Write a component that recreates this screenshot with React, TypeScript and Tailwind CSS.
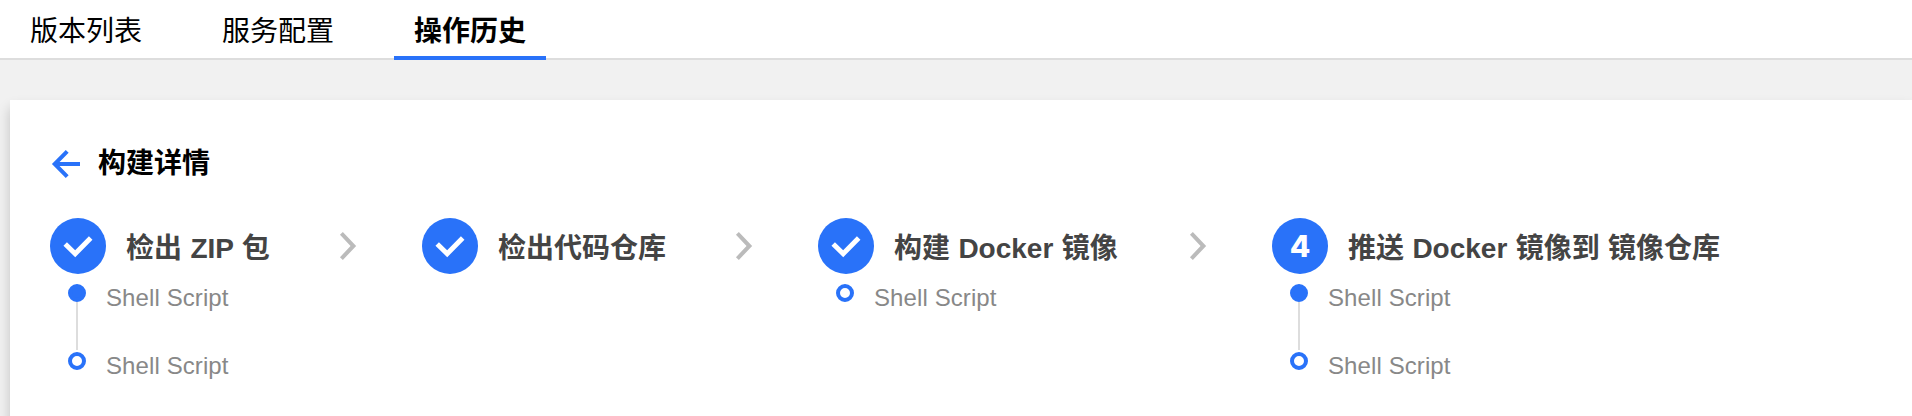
interface Step {
  title: string;
  done: boolean;
  width: string;
  tasks: string[];
}

const tabs = ["版本列表", "服务配置", "操作历史"];
const activeTab = "操作历史";

const steps: Step[] = [
  { title: "检出 ZIP 包", done: true, width: "w-[372px]", tasks: ["Shell Script", "Shell Script"] },
  { title: "检出代码仓库", done: true, width: "w-[396px]", tasks: [] },
  { title: "构建 Docker 镜像", done: true, width: "w-[454px]", tasks: ["Shell Script"] },
  { title: "推送 Docker 镜像到 镜像仓库", done: false, width: "w-[520px]", tasks: ["Shell Script", "Shell Script"] },
];

function BackIcon() {
  return (
    <svg width="28" height="28" viewBox="0 0 28 28" fill="none" stroke="#2972f9" strokeWidth="4" overflow="visible">
      <path d="M15.2 1.3 2.7 14l12.5 12.7M3 14h25" />
    </svg>
  );
}

function CheckIcon() {
  return (
    <svg width="56" height="56" viewBox="0 0 56 56" fill="none" stroke="#fff" strokeWidth="5">
      <path d="M15.2 26 25.2 35.7 40.7 20" />
    </svg>
  );
}

function ChevronIcon() {
  return (
    <svg width="16" height="28" viewBox="0 0 16 28" fill="none" stroke="#bbb" strokeWidth="4" overflow="visible">
      <path d="M1.4 1.4 13.4 14l-12 12.6" />
    </svg>
  );
}

function TaskList({ tasks }: { tasks: string[] }) {
  return (
    <ul className="mt-[10px] ml-[18px]">
      {tasks.map((task, i) => {
        const last = i === tasks.length - 1;
        return (
          <li key={i} className="flex h-[68px] gap-5">
            <div className="flex w-[18px] flex-col items-center">
              <span className={`size-[18px] shrink-0 rounded-full border-4 border-[#2972f9] ${last ? "bg-white" : "bg-[#2972f9]"}`} />
              {!last && <span className="h-12 w-0.5 bg-[#ddd]" />}
            </div>
            <span className="text-2xl leading-[28px] tracking-[0.1px] text-[#888]">{task}</span>
          </li>
        );
      })}
    </ul>
  );
}

export default function App() {
  return (
    <div className="h-[416px] overflow-hidden bg-[#f1f1f1] font-['Liberation_Sans','Noto_Sans_CJK_SC',sans-serif] text-black">
      <nav className="flex h-[60px] gap-10 border-b-2 border-[#ddd] bg-white pl-[10px] text-[28px]">
        {tabs.map((tab) => (
          <div
            key={tab}
            className={`h-[60px] px-5 leading-[63px] ${tab === activeTab ? "border-b-4 border-[#2972f9] font-bold" : "font-normal"}`}>
            {tab}
          </div>
        ))}
      </nav>

      <main className="mt-10 ml-[10px] h-[400px] bg-white pl-10 shadow-[0_8px_12px_rgba(0,0,0,0.2)]">
        <header className="flex h-[118px] gap-[18px] pt-[50px] pl-0.5">
          <BackIcon />
          <h1 className="text-[28px] leading-[28px] font-bold">构建详情</h1>
        </header>

        <ol className="flex">
          {steps.map((step, i) => (
            <li key={step.title} className={`shrink-0 ${step.width}`}>
              <div className="flex h-14 items-center">
                <div className="flex size-14 shrink-0 items-center justify-center rounded-full bg-[#2972f9] font-['Inter',sans-serif] text-[30px] font-extrabold text-white">
                  {step.done ? <CheckIcon /> : i + 1}
                </div>
                <h2 className="ml-5 pt-[5px] text-[28px] leading-[56px] font-bold [word-spacing:0.6px] whitespace-nowrap text-[#444]">{step.title}</h2>
                {i < steps.length - 1 && (
                  <div className="mr-[66px] ml-auto">
                    <ChevronIcon />
                  </div>
                )}
              </div>
              <TaskList tasks={step.tasks} />
            </li>
          ))}
        </ol>
      </main>
    </div>
  );
}
